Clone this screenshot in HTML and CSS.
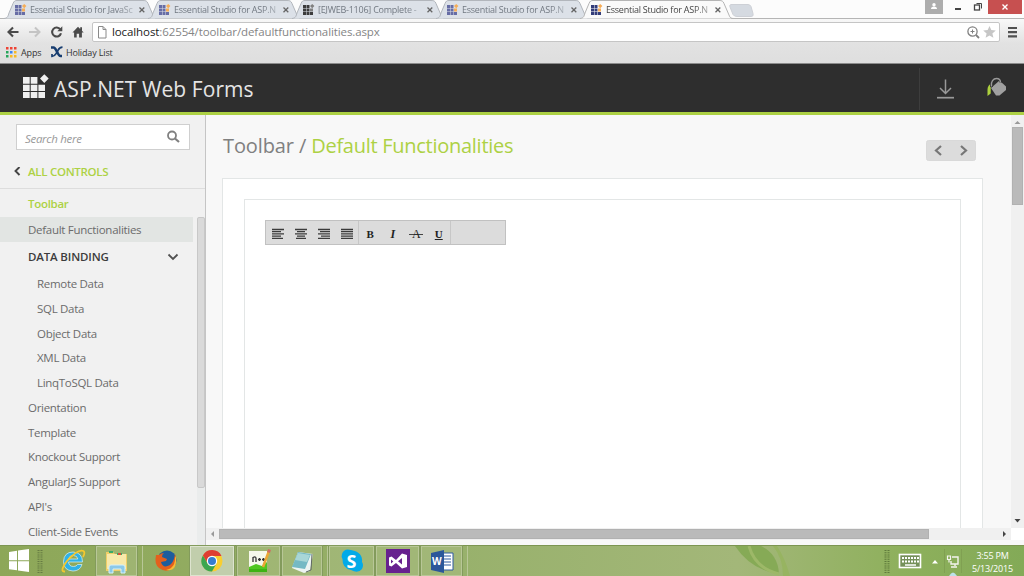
FILE: index.html
```html
<!DOCTYPE html>
<html lang="en">
<head>
<meta charset="utf-8">
<title>Toolbar / Default Functionalities</title>
<link rel="stylesheet" href="styles.css">
</head>
<body>
<svg class="defs" width="0" height="0">
  <symbol id="fav" viewBox="0 0 12 12"><path fill="currentColor" d="M0 1h3v3H0zM3.500 1h3v3h-3zM0 4.500h3v3H0zM3.500 4.500h3v3h-3zM0 8h3v3H0zM3.500 8h3v3h-3zM7 8h3v3H7z"/><path class="accent" d="M7 4.500h3v3H7zM9.200 0l2.200 2.100-2.200 2.100L7 2.100z"/></symbol>
  <symbol id="tab" viewBox="0 0 154 19"><path d="M0 18.500C4 18 4 16 5 13L9 3.500C10 1 11 .5 13 .5H139C142 .5 143 1 144 3.500L149 15C150 18 151 18.500 154 18.500"/></symbol>
  <symbol id="close" viewBox="0 0 8 8"><path d="M1.500 1.500l4.800 4.800M6.300 1.500L1.500 6.300" stroke="#666" stroke-width="1.300"/></symbol>
</svg>
<div class="screen">
  <div class="tabs">
    <div class="tab"><svg class="shape"><use href="#tab"/></svg><svg class="fav"><use href="#fav"/></svg><span>Essential Studio for JavaSc</span><svg class="x"><use href="#close"/></svg></div>
    <div class="tab"><svg class="shape"><use href="#tab"/></svg><svg class="fav"><use href="#fav"/></svg><span>Essential Studio for ASP.N</span><svg class="x"><use href="#close"/></svg></div>
    <div class="tab"><svg class="shape"><use href="#tab"/></svg><svg class="fav gray"><use href="#fav"/></svg><span>[EJWEB-1106] Complete -</span><svg class="x"><use href="#close"/></svg></div>
    <div class="tab"><svg class="shape"><use href="#tab"/></svg><svg class="fav"><use href="#fav"/></svg><span>Essential Studio for ASP.N</span><svg class="x"><use href="#close"/></svg></div>
    <div class="tab active"><svg class="shape"><use href="#tab"/></svg><svg class="fav"><use href="#fav"/></svg><span>Essential Studio for ASP.N</span><svg class="x"><use href="#close"/></svg></div>
    <svg class="newtab" width="26" height="13"><path d="M2 .5h17q2 0 3 2l2 7q1 3-2 3H8q-3 0-4-2L1 3Q0 1 2 .5z" fill="#d5dae1" stroke="#cdd0d6"/></svg>
    <div class="wincontrols">
      <svg class="user" width="18" height="14"><rect width="18" height="14" fill="#adadad"/><circle cx="9" cy="4.700" r="1.700" fill="#fff"/><path d="M6 9q0-2.500 3-2.500T12 9z" fill="#fff"/></svg>
      <svg width="45" height="14"><path d="M12 9h6" stroke="#444" stroke-width="2"/><path d="M33.500 3.500h5v5" fill="none" stroke="#444"/><rect x="31.500" y="5" width="5" height="5" fill="#fff" stroke="#444" stroke-width="1.300"/></svg>
      <svg width="34" height="14"><rect width="34" height="14" fill="#c75050"/><path d="M14.500 4.500l5 5m0-5l-5 5" stroke="#fff" stroke-width="1.400"/></svg>
    </div>
  </div>
  <div class="chrome">
    <div class="nav">
      <svg width="92" height="22" fill="none"><path d="M18.500 12H9M13 7.500L8.500 12l4.500 4.500" stroke="#4a4a4a" stroke-width="2.100"/><path d="M29 12h9.500M35 7.500l4.500 4.500-4.500 4.500" stroke="#c4c4c4" stroke-width="2"/><path d="M60.300 9.400A4.500 4.500 0 1 0 61 13.200" stroke="#4a4a4a" stroke-width="2.100"/><path d="M62.300 6.300v5h-5z" fill="#4a4a4a"/><path d="M72.500 12.500L78 6.700l2.200 2.200V7.200h1.800v3.500l1.700 1.800h-1.800v5h-2.800v-3.800h-2.400v3.800h-2.600v-5z" fill="#4a4a4a"/></svg>
      <div class="address">
        <svg width="19" height="18" fill="none"><path d="M5.500 3.500h4.500l3 3v8.500H5.500zM10 3.500v3h3" stroke="#8a8a8a"/></svg>
        <span class="url"><b>localhost</b>:62554/toolbar/defaultfunctionalities.aspx</span>
        <svg class="addricons" width="34" height="18"><g fill="none" stroke="#808080"><circle cx="7.500" cy="8.500" r="4.600" stroke-width="1.300"/><path d="M7.500 6.500v4M5.500 8.500h4"/><path d="M11 12l3 3" stroke-width="1.800"/></g><path d="M24.500 3l1.800 4 4.500.4-3.400 3 1 4.400-3.900-2.400-3.900 2.400 1-4.400-3.400-3 4.500-.4z" fill="#c6c6c6"/></svg>
      </div>
      <svg width="24" height="22"><path d="M8 8h9M8 12.200h9M8 16.400h9" stroke="#505050" stroke-width="2.200"/></svg>
    </div>
    <div class="bookmarks">
      <svg width="11" height="11"><path d="M0 0h2.500v2.500H0zM4 0h2.500v2.500H4zM8 0h2.500v2.500H8z" fill="#ed4334"/><path d="M0 4h2.500v2.500H0zM0 8h2.500v2.500H0z" fill="#26a65b"/><path d="M4 4h2.500v2.500H4z" fill="#3b83f2"/><path d="M8 4h2.500v2.500H8zM4 8h2.500v2.500H4zM8 8h2.500v2.500H8z" fill="#f7b923"/></svg>
      <span class="apps">Apps</span>
      <svg width="12" height="12" fill="none" stroke="#173d70"><path d="M0 1.500h2.500c3 0 4 8.500 7 8.500H11" stroke-width="2.600"/><path d="M11.500 1.200c-4 0-4 3-5.500 5S4 10.500 1 10.500V8" stroke-width="1.700"/></svg>
      <span class="holiday">Holiday List</span>
    </div>
  </div>
  <header class="header">
    <svg width="27" height="26" fill="#efefef"><path d="M0 3h6.700v6.700H0zM7.700 3h6.700v6.700H7.700zM0 10.700h6.700v6.300H0zM7.700 10.700h6.700v6.300H7.700zM15.400 10.700h6.600v6.300h-6.600zM0 18h6.700v6H0zM7.700 18h6.700v6H7.700zM15.400 18h6.600v6h-6.600zM21.300.3l4.400 4.300-4.400 4.400L17 4.600z"/></svg>
    <h1>ASP.NET Web Forms</h1>
    <svg class="actions" width="105" height="48"><path d="M.5 4v42" stroke="#3d3d3d"/><g fill="none" stroke="#999" stroke-width="1.500"><path d="M26.500 15.500v14M21 24l5.500 5.500L32 24"/><path d="M18 33.700h17" stroke-width="1.700"/></g><path d="M73 19q-4.500 2-4.500 6.500V32l3.200-2.500V24z" fill="#add13d"/><path d="M72 24l8.500-7.500L87 22.500V26l-6.500 5.500H77z" fill="#a0a0a0"/><path d="M72.500 23c-1-5 2-8.500 5.500-8.500 3 0 4 2 4 4" stroke="#2e2e2e" stroke-width="3" fill="none"/><path d="M72.500 22.500c-1-5 2-8 5-8 3 0 4 1.500 4 4" stroke="#999" stroke-width="1.400" fill="none"/></svg>
  </header>
  <main class="page">
    <aside class="sidebar">
      <div class="search"><span>Search here</span><svg width="16" height="16" fill="none" stroke="#808080" stroke-width="1.800"><circle cx="6" cy="5.500" r="4"/><path d="M9 8.500l4 3.500" stroke-width="2.200"/></svg></div>
      <div class="all"><svg width="8" height="10"><path d="M6.500 0L2.500 4l4 4" fill="none" stroke="#444" stroke-width="1.900"/></svg><span>ALL CONTROLS</span></div>
      <div class="group"><span>Toolbar</span></div>
      <div class="menuarea">
        <ul class="menu">
          <li class="selected"><span>Default Functionalities</span></li>
          <li class="binding"><span>DATA BINDING</span><svg width="12" height="8"><path d="M1.500 1.500L6 6l4.500-4.500" fill="none" stroke="#505050" stroke-width="1.800"/></svg></li>
          <li class="sub"><span>Remote Data</span></li>
          <li class="sub"><span>SQL Data</span></li>
          <li class="sub"><span>Object Data</span></li>
          <li class="sub"><span>XML Data</span></li>
          <li class="sub"><span>LinqToSQL Data</span></li>
          <li><span>Orientation</span></li>
          <li><span>Template</span></li>
          <li><span>Knockout Support</span></li>
          <li><span>AngularJS Support</span></li>
          <li><span>API's</span></li>
          <li><span>Client-Side Events</span></li>
        </ul>
        <div class="sidescroll"><div></div></div>
      </div>
    </aside>
    <section class="content">
      <div class="view">
        <div class="titlebar"><h2>Toolbar / <em>Default Functionalities</em></h2>
          <svg class="pager" width="50" height="21" fill="none"><rect x=".5" y=".5" width="49" height="20" rx="2" fill="#dcdcdc" stroke="#d9d9d9"/><path d="M15 6l-5 4.500 5 4.500M35 6l5 4.500-5 4.500" stroke="#777" stroke-width="2.200"/></svg>
        </div>
        <div class="panel"><div class="sample">
          <div class="toolbar">
            <div class="cell align"><svg width="92" height="22" stroke="#3b3b3b" stroke-width="1.300"><path d="M6 7.500h12M6 9.700h9M6 11.900h12M6 14.100h9M6 16.300h11M29 7.500h12M31 9.700h8M29 11.900h12M31 14.100h8M30 16.300h10M52 7.500h12M54 9.700h10M52 11.900h12M55 14.100h9M52 16.300h12M75 7.500h12M75 9.700h12M75 11.900h12M75 14.100h12M75 16.300h12"/></svg></div>
            <div class="cell fmt"><b>B</b><i>I</i><span class="strike">A</span><u>U</u></div>
            <div class="cell empty"></div>
          </div>
        </div></div>
      </div>
      <div class="vscroll"><svg width="13" height="14"><path d="M3.500 9l3-3 3 3z" fill="#999"/></svg><div></div><svg width="13" height="14"><path d="M3.500 5h6l-3 3.500z" fill="#444"/></svg></div>
      <div class="hscroll"><svg width="13" height="12"><path d="M8 3v6L5 6z" fill="#999"/></svg><div></div><svg width="13" height="12"><path d="M5 3v6l3-3z" fill="#444"/></svg></div>
      <div class="corner"></div>
    </section>
  </main>
  <footer class="taskbar">
    <svg class="leaf" width="120" height="30"><path d="M22 0Q38 24 66 28Q65 8 48 0z" fill="#86aa56"/><path d="M36 0Q42 22 66 28" fill="none" stroke="#9db868" stroke-width="3"/><path d="M60 0Q70 12 70 30h7Q72 12 64 0z" fill="#97b461"/></svg>
    <svg class="start" width="50" height="30"><path d="M9 6l8-1.200v9.500H9zM18 4.600L29 3v11.300H18zM9 15.300h8v9L9 23.200zM18 15.300h11V26l-11-1.500z" fill="#fff"/><path d="M38.500 4v23M41.500 4v23" stroke="#667b43" stroke-width="2" stroke-dasharray="1 1.200"/></svg>
    <span class="task plain ie"><svg width="28" height="28"><path fill-rule="evenodd" d="M23.500 15H9.500q.5 4.500 5 4.500 3 0 4-2h4.500Q21 24 14 24 4.500 23.500 4.500 14.500 5 5 14 5q9.500.5 9.500 10zM9.500 12h9.300q-.5-3.500-4.500-3.500T9.500 12z" fill="#2fb2e6" stroke="#d9f1fa" stroke-width=".7"/><path d="M6 24.500Q0 25 8 14 19 1.500 24.500 4q2 1.500-.5 6" fill="none" stroke="#f5c82e" stroke-width="1.800"/></svg></span>
    <span class="task stack explorer"><svg width="28" height="28"><path d="M3 5h7l2 2h12v17H3z" fill="#f0ce67"/><path d="M4 7h19v15H4z" fill="#f8e9aa"/><path d="M6 5h4M14 7h5" stroke="#3aaa68" stroke-width="2"/><path d="M15 7h3" stroke="#dc4e38" stroke-width="2"/><path d="M6 26v-6q0-2 2-2h12q2 0 2 2v6h-4v-4h-8v4z" fill="#8cc9e8" stroke="#d5f0fb"/></svg></span>
    <span class="task plain firefox"><svg width="26" height="28"><circle cx="14" cy="13" r="9.500" fill="#1d5d9d"/><path d="M3 8q-2 9 3 13 8 6 15-1 4-6 1-13-1 8-5 11-7 4-9-3l5-1 1-2-5-2q0-3 2-4-3 0-5 2z" fill="#e3601d"/><path d="M22 9q1 12-9 14 11 2 10-12z" fill="#f8ba35"/></svg></span>
    <span class="task current"><svg width="24" height="24"><circle cx="12" cy="12" r="10.500" fill="#f8ce30"/><path d="M2.900 6.500A10.500 10.500 0 0 1 21.500 7H12L8 15z" fill="#df3e32"/><path d="M2.900 6.500A10.500 10.500 0 0 0 12 22.500l4.500-8L8 15z" fill="#3ba650"/><circle cx="12" cy="12" r="5.200" fill="#fff"/><circle cx="12" cy="12" r="4" fill="#367dcf"/></svg></span>
    <span class="task npp"><svg width="24" height="26"><path d="M2 3h18v21H2z" fill="#f6f8eb"/><path d="M2 19l7-3 6 2 5-4v10H2z" fill="#50c720"/><path d="M2 21h18v3H2z" fill="#3db314"/><path d="M6 14V9.500q3-1.500 3 1V14M11 11.500h3M12.500 10v3M15 11.500h3M16.500 10v3" stroke="#333" stroke-width="1.300" fill="none"/><path d="M22 3l-6 16" stroke="#eca635" stroke-width="2.500"/><path d="M22.500 1.500l-1 3" stroke="#cf6d64" stroke-width="3"/></svg></span>
    <span class="task stack notes"><svg width="26" height="26"><path d="M9 4l15 2-3 17-6 2L3 20z" fill="#edf4f2"/><path d="M9 4l13 2-6 15-13-2z" fill="#75b9c4"/><path d="M9 5l12 2-3 7-12-2z" fill="#a8d6d6"/><path d="M23 6l-1 16-5 2" fill="none" stroke="#5f6864"/></svg></span>
    <span class="task skype"><svg width="26" height="26"><path d="M12 2Q5 0 3 6q-1 3 .5 5Q3 20 12 22q7 4 11-1 2-4 0-7Q24 4 12 2z" fill="#02aae8"/></svg><strong>S</strong></span>
    <span class="task vs"><svg width="24" height="24"><path d="M0 0h24v24H0z" fill="#67218f"/><path fill-rule="evenodd" d="M3 8.500l2.500-1L10 11l6-6.500L21 6v12l-5 1.500L10 14l-4.500 3.500-2.500-1zM16 9l-4 3.300 4 3.200zM5 10.500v4l2.300-2z" fill="#fff"/></svg></span>
    <span class="task stack word"><svg width="24" height="24"><path d="M13 4h10v17H13z" fill="#fff" stroke="#2e5aa1"/><path d="M14 7h7M14 10h7M14 13h7M14 16h7" stroke="#2e5aa1" stroke-width="1.200"/><path d="M1 4l13-3v23L1 21z" fill="#2b579a"/></svg><strong>W</strong></span>
    <svg class="tray" width="84" height="30"><path d="M3.500 4v23M6.500 4v23" stroke="#5e7a3b" stroke-width="2" stroke-dasharray="1 1.200"/><rect x="17.500" y="8.500" width="21" height="13" fill="#75905a" stroke="#fff" stroke-width="1.600"/><path d="M20 12h17M20 15.500h17" stroke="#fff" stroke-width="2.200" stroke-dasharray="2 1"/><path d="M23 19h11" stroke="#fff" stroke-width="1.500"/><path d="M50 17.500l3-3.500 3 3.500z" fill="#fff"/><path d="M62.500 3v24M79.500 3v24" stroke="#80a052"/><path d="M70 11h6v7h-7v-3M73 18v2M69 21h6" fill="none" stroke="#f3f4ee" stroke-width="1.400"/><path d="M65.500 10v3.500h3V10zM67 13.500v3" fill="none" stroke="#f3f4ee" stroke-width="1.200"/><path d="M67 30q4-7 8 0z" fill="#bce2e9"/></svg>
    <div class="clock"><span>3:55 PM</span><span>5/13/2015</span></div>
  </footer>
</div>
</body>
</html>
```

FILE: styles.css
```css
* { box-sizing: border-box; }
body { margin: 0; font: 11.5px/1 "Open Sans", sans-serif; letter-spacing: -.3px; color: #6b6b6b; }
svg { display: block; flex: none; }
.defs { position: absolute; }
.screen { width: 1024px; height: 576px; display: flex; flex-direction: column; overflow: hidden; background: #f8f8f8; }

.tabs { height: 19px; flex: none; display: flex; padding-left: 4px; background: #fcfcfc; border-bottom: 1px solid #b5b5b5; }
.tab { width: 154px; margin-right: -10px; height: 19px; flex: none; display: flex; align-items: center; padding-left: 11px; position: relative; font-size: 9px; color: #727982; }
.tab .shape { position: absolute; left: 0; top: 0; width: 154px; height: 19px; fill: #dce1e8; stroke: #b2b6bc; }
.tab.active { color: #444; z-index: 1; }
.tab.active .shape { fill: #fafafa; stroke: #b5b5b5; }
.tab .fav { width: 12px; height: 12px; color: #676da5; position: relative; }
.accent { fill: #f5ad58; }
.tab.active .fav { color: #343d7a; }
.tab .fav.gray { color: #555; filter: grayscale(1) brightness(.7); }
.tab span { position: relative; width: 104px; margin-left: 3px; line-height: 15px; white-space: nowrap; letter-spacing: -.24px; -webkit-mask-image: linear-gradient(90deg, #000 84%, #0005); mask-image: linear-gradient(90deg, #000 84%, #0005); }
.tab .x { position: relative; width: 8px; height: 8px; margin-left: 4px; }
.newtab { margin: 4px 0 0 5px; }
.wincontrols { display: flex; margin-left: auto; margin-right: 2px; }

.chrome { height: 45px; flex: none; background: linear-gradient(#f8f8f8, #e2e2e2 55%, #dedede); border-bottom: 1px solid #8b8b8b; }
.nav { height: 24px; display: flex; }
.nav > svg { margin-top: 1px; }
.address { width: 908px; height: 20px; margin-top: 3px; border: 1px solid #c5c5c5; border-radius: 2px; background: #fff; display: flex; }
.url { font-size: 11.5px; line-height: 18px; letter-spacing: -.1px; color: #858585; }
.url b { font-weight: 400; color: #222; }
.addricons { margin-left: auto; }
.bookmarks { height: 20px; display: flex; align-items: center; padding-left: 6px; padding-bottom: 2px; font-size: 9px; letter-spacing: -.15px; color: #333; }
.apps { width: 26px; margin-left: 4px; margin-right: 4px; }
.holiday { margin-left: 3px; }

.header { height: 51px; flex: none; background: #2e2e2e; border-bottom: 3px solid #add144; display: flex; padding-left: 23px; }
.header > svg:first-child { margin-top: 10px; }
.header h1 { margin: 0 0 0 4px; font: 400 21px/50px "Open Sans", sans-serif; letter-spacing: .07px; color: #e4e4e4; white-space: nowrap; }
.actions { margin-left: auto; }

.page { height: 430px; flex: none; display: flex; }
.sidebar { width: 206px; flex: none; background: #f1f1f1; border-right: 1px solid #c5c5c5; display: flex; flex-direction: column; }
.search { width: 174px; height: 26px; flex: none; margin: 9px 0 0 16px; border: 1px solid #cfcfcf; background: #fff; display: flex; justify-content: space-between; padding: 5px 7px 0 8px; font-style: italic; color: #999; line-height: 17px; }
.all { display: flex; align-items: center; height: 38px; margin-top: 1px; padding-top: 4px; padding-left: 13px; border-bottom: 1px solid #ddd; flex: none; color: #add144; font-weight: 600; }
.all svg { margin-right: 7px; }
.all span { line-height: 15px; }
.group { height: 28px; flex: none; padding-left: 28px; line-height: 30px; color: #add144; font-weight: 600; }
.menuarea { flex: 1; display: flex; justify-content: space-between; overflow: hidden; }
.menu { list-style: none; margin: 0; padding: 0; width: 193px; }
.menu li { height: 24.75px; padding-left: 28px; line-height: 24px; }
.menu .selected { height: 25px; background: #e2e5e3; line-height: 25px; letter-spacing: -.28px; }
.menu .binding { height: 30px; line-height: 30px; display: flex; align-items: center; justify-content: space-between; color: #3c3c3c; font-weight: 600; letter-spacing: -.15px; padding-right: 14px; }
.menu .sub { padding-left: 37px; }
.sidescroll { width: 8px; background: #eaecec; }
.sidescroll div { height: 271px; border: 1px solid #c8c8c8; border-radius: 2px; background: #dadada; }

.content { flex: 1; display: grid; grid-template-columns: 1fr 13px; grid-template-rows: 413px 12px 5px; }
.view { overflow: hidden; padding-left: 16px; }
.titlebar { height: 63px; display: flex; justify-content: space-between; }
.titlebar h2 { margin: 0 0 0 1px; font: 400 20px/61px "Open Sans", sans-serif; letter-spacing: -.12px; color: #808080; white-space: nowrap; }
.titlebar em { font-style: normal; letter-spacing: -.27px; color: #add144; }
.pager { margin: 25px 35px 0 0; }
.panel { width: 761px; height: 390px; border: 1px solid #e3e6e6; background: #fff; padding: 20px 0 0 21px; }
.sample { width: 717px; height: 370px; border: 1px solid #e3e6e6; padding: 20px 0 0 20px; }
.toolbar { width: 241px; height: 25px; border: 1px solid #c1c1c1; background: #dcdcdc; display: flex; }
.cell { height: 23px; border-right: 1px solid #c7c7c7; }
.align { width: 93px; padding-top: 1px; }
.fmt { width: 92px; display: flex; align-items: center; font: 700 11px/22px "Liberation Serif", serif; letter-spacing: 0; color: #222; padding-top: 3px; }
.fmt > * { width: 23px; text-align: center; }
.fmt i { font-size: 12px; }
.fmt .strike { margin-left: 1px; font-weight: 400; font-size: 12px; background: linear-gradient(#444, #444) center 11px / 14px 1px no-repeat; }
.empty { flex: 1; border: 0; }
.vscroll { background: #f0f0f0; }
.vscroll div { width: 11px; height: 78px; margin-left: 1px; margin-top: -2px; margin-bottom: 309px; background: #bababa; border: 1px solid #b1b1b1; }
.hscroll { background: #f0f0f0; display: flex; align-items: center; justify-content: space-between; }
.hscroll div { width: 710px; height: 10px; margin-right: auto; background: #bababa; border: 1px solid #b1b1b1; }
.corner { background: #fff; }

.taskbar { height: 31px; flex: none; display: flex; position: relative; background: linear-gradient(90deg, #8da758, #98b16c 45%, #a3b779 72%, #8eb05c 88%, #83aa57); border-top: 1px solid #7c9551; }
.leaf { position: absolute; left: 713px; top: 0; }
.task { width: 45px; height: 30px; margin-right: 2px; display: flex; align-items: center; justify-content: center; flex: none; position: relative; background: #aabd8488; border: 1px solid #b8c797; outline: 1px solid #839b5c; }
.plain { background: none; border: 0; outline: 0; }
.ie { width: 45px; margin: 0 1px 0 0; }
.explorer { width: 41px; margin-right: 9px; }
.firefox { width: 40px; margin-right: 4px; }
.current { width: 44px; margin-right: 3px; background: #c1ceac; border-color: #dde4cf; }
.npp, .vs { width: 43px; }
.stack::after { content: ""; position: absolute; left: 100%; top: -1px; width: 5px; height: 30px; border-right: 1px solid #b8c797; border-left: 1px solid #b8c797; }
.notes { width: 40px; margin-right: 7px; }
.task strong { position: absolute; color: #fff; font: 700 18px/20px "Open Sans", sans-serif; letter-spacing: 0; }
.word { width: 41px; }
.word strong { left: 10px; font-size: 10px; }
.tray { margin-left: auto; margin-right: -2px; }
.clock { width: 57px; display: flex; flex-direction: column; align-items: center; padding-top: 3px; margin-right: 3px; color: #fff; font-size: 9px; letter-spacing: -.2px; line-height: 13px; }
```
